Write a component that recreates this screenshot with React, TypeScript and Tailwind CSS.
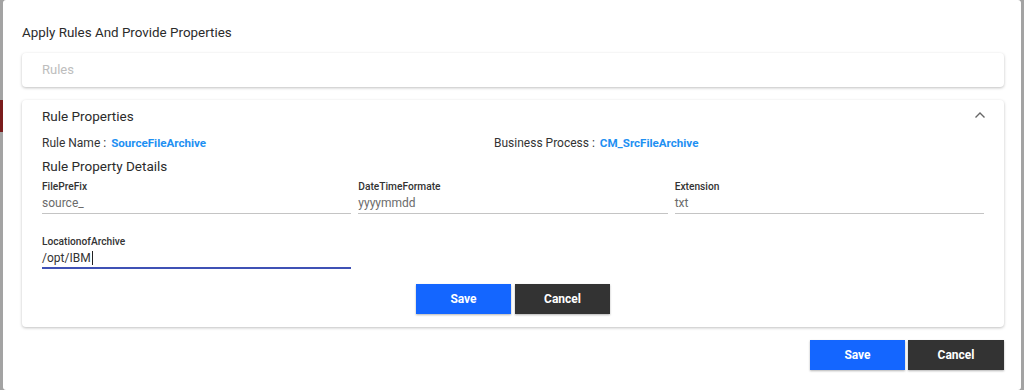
import React from "react";

function Field({ label, value, active }: { label: string; value: string; active?: boolean }) {
  return (
    <div className="flex flex-col">
      <div className="text-[10.2px] leading-[12px] font-medium text-[#333]">{label}</div>
      <div
        className={
          "h-[21px] flex items-center text-[12px] " +
          (active ? "text-[#333] border-b-2 border-[#3f51b5]" : "text-[#6b6b6b] border-b border-[#c4c4c4]")
        }
      >
        {value}
        {active && <span className="inline-block w-px h-[14px] bg-[#222] ml-px" />}
      </div>
    </div>
  );
}

export default function App() {
  return (
    <div
      className="w-[1024px] h-[390px] flex bg-[#9a9a9a] overflow-hidden"
      style={{ fontFamily: "Roboto, 'Liberation Sans', sans-serif" }}
    >
      <div className="w-[3px] flex flex-col">
        <div className="h-[100px] bg-[#a3a3a3]" />
        <div className="h-[32px] bg-[#7a1c1c]" />
        <div className="flex-1 bg-[#a3a3a3]" />
      </div>
      <div className="w-[1018px] h-[390px] bg-white rounded-[3px] flex flex-col pl-[19px] pr-[17px]">
        <div className="pt-[25px] h-[53px] text-[13.4px] leading-[16px] text-[#2b2b2b]">Apply Rules And Provide Properties</div>
        <div className="h-[34px] rounded-[4px] bg-white shadow-[0_1px_3px_rgba(0,0,0,0.25)] flex items-center pl-[20px] text-[13px] text-[#bdbdbd]">
          Rules
        </div>
        <div className="mt-[13px] h-[227px] rounded-[4px] bg-white shadow-[0_1px_3px_rgba(0,0,0,0.25)] px-[20px] pt-[7px] flex flex-col">
          <div className="flex items-center justify-between h-[18px]">
            <div className="text-[13.5px] text-[#2b2b2b]">Rule Properties</div>
            <svg width="12" height="8" viewBox="0 0 12 8" className="mr-[-2px] mb-[3px]">
              <path d="M1.5 6.5 L6 2 L10.5 6.5" fill="none" stroke="#666" strokeWidth="1.4" />
            </svg>
          </div>
          <div className="grid grid-cols-[452px_1fr] mt-[9px] h-[18px] items-center text-[12px]">
            <div className="text-[#333]">
              Rule Name :<span className="ml-[5px] text-[11.6px] font-bold text-[#1e90f2]">SourceFileArchive</span>
            </div>
            <div className="text-[#333]">
              Business Process :<span className="ml-[5px] text-[11.6px] font-bold text-[#1e90f2]">CM_SrcFileArchive</span>
            </div>
          </div>
          <div className="mt-[6px] text-[13.5px] leading-[16px] text-[#2b2b2b]">Rule Property Details</div>
          <div className="grid grid-cols-3 gap-x-[7px] mt-[7px]">
            <Field label="FilePreFix" value="source_" />
            <Field label="DateTimeFormate" value="yyyymmdd" />
            <Field label="Extension" value="txt" />
          </div>
          <div className="grid grid-cols-3 gap-x-[7px] mt-[22px]">
            <Field label="LocationofArchive" value="/opt/IBM" active />
          </div>
          <div className="flex justify-center gap-[4px] mt-[15px]">
            <button className="w-[95px] h-[30px] bg-[#1466ff] text-white text-[12px] font-bold shadow-[0_1px_2px_rgba(0,0,0,0.3)]">
              Save
            </button>
            <button className="w-[95px] h-[30px] bg-[#333333] text-white text-[12px] font-bold shadow-[0_1px_2px_rgba(0,0,0,0.3)]">
              Cancel
            </button>
          </div>
        </div>
        <div className="flex justify-end gap-[3px] mt-[13px]">
          <button className="w-[95px] h-[30px] bg-[#1466ff] text-white text-[12px] font-bold shadow-[0_1px_2px_rgba(0,0,0,0.3)]">
            Save
          </button>
          <button className="w-[96px] h-[30px] bg-[#333333] text-white text-[12px] font-bold shadow-[0_1px_2px_rgba(0,0,0,0.3)]">
            Cancel
          </button>
        </div>
      </div>
      <div className="flex-1 bg-[#a3a3a3]" />
    </div>
  );
}
